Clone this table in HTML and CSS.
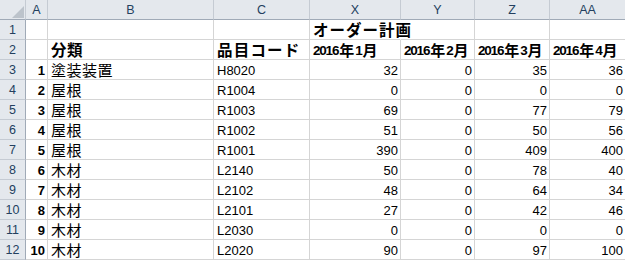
FILE: index.html
```html
<!DOCTYPE html>
<html lang="ja">
<head>
<meta charset="utf-8">
<title>オーダー計画</title>
<link rel="stylesheet" href="styles.css">
</head>
<body>
<div class="sheet">
  <div class="c ch corner"><span class="tri"></span></div>
  <div class="c ch">A</div><div class="c ch">B</div><div class="c ch">C</div><div class="c ch">X</div><div class="c ch">Y</div><div class="c ch">Z</div><div class="c ch">AA</div>

  <div class="c rh">1</div>
  <div class="c"></div><div class="c"></div><div class="c"></div>
  <div class="c spill"><span class="jp b title">オーダー計画</span></div>
  <div class="c"></div><div class="c"></div><div class="c"></div>

  <div class="c rh">2</div>
  <div class="c"></div>
  <div class="c"><span class="jp b hdr">分類</span></div>
  <div class="c"><span class="jp b hdr code">品目コード</span></div>
  <div class="c"><span class="mo">2016</span><span class="jp b m">年</span><span class="mo">1</span><span class="jp b m">月</span></div>
  <div class="c"><span class="mo">2016</span><span class="jp b m">年</span><span class="mo">2</span><span class="jp b m">月</span></div>
  <div class="c"><span class="mo">2016</span><span class="jp b m">年</span><span class="mo">3</span><span class="jp b m">月</span></div>
  <div class="c"><span class="mo">2016</span><span class="jp b m">年</span><span class="mo">4</span><span class="jp b m">月</span></div>

  <div class="c rh">3</div><div class="c r b">1</div><div class="c"><span class="jp">塗装装置</span></div><div class="c">H8020</div><div class="c r">32</div><div class="c r">0</div><div class="c r">35</div><div class="c r">36</div>
  <div class="c rh">4</div><div class="c r b">2</div><div class="c"><span class="jp">屋根</span></div><div class="c">R1004</div><div class="c r">0</div><div class="c r">0</div><div class="c r">0</div><div class="c r">0</div>
  <div class="c rh">5</div><div class="c r b">3</div><div class="c"><span class="jp">屋根</span></div><div class="c">R1003</div><div class="c r">69</div><div class="c r">0</div><div class="c r">77</div><div class="c r">79</div>
  <div class="c rh">6</div><div class="c r b">4</div><div class="c"><span class="jp">屋根</span></div><div class="c">R1002</div><div class="c r">51</div><div class="c r">0</div><div class="c r">50</div><div class="c r">56</div>
  <div class="c rh">7</div><div class="c r b">5</div><div class="c"><span class="jp">屋根</span></div><div class="c">R1001</div><div class="c r">390</div><div class="c r">0</div><div class="c r">409</div><div class="c r">400</div>
  <div class="c rh">8</div><div class="c r b">6</div><div class="c"><span class="jp">木材</span></div><div class="c">L2140</div><div class="c r">50</div><div class="c r">0</div><div class="c r">78</div><div class="c r">40</div>
  <div class="c rh">9</div><div class="c r b">7</div><div class="c"><span class="jp">木材</span></div><div class="c">L2102</div><div class="c r">48</div><div class="c r">0</div><div class="c r">64</div><div class="c r">34</div>
  <div class="c rh">10</div><div class="c r b">8</div><div class="c"><span class="jp">木材</span></div><div class="c">L2101</div><div class="c r">27</div><div class="c r">0</div><div class="c r">42</div><div class="c r">46</div>
  <div class="c rh">11</div><div class="c r b">9</div><div class="c"><span class="jp">木材</span></div><div class="c">L2030</div><div class="c r">0</div><div class="c r">0</div><div class="c r">0</div><div class="c r">0</div>
  <div class="c rh">12</div><div class="c r b">10</div><div class="c"><span class="jp">木材</span></div><div class="c">L2020</div><div class="c r">90</div><div class="c r">0</div><div class="c r">97</div><div class="c r">100</div>
</div>
</body>
</html>
```
FILE: styles.css
```css
html, body {
  margin: 0;
  padding: 0;
  background: #ffffff;
  overflow: hidden;
}

.sheet {
  display: grid;
  grid-template-columns: 26px 22px 166px 96px 91px 74px 75px 76px;
  grid-auto-rows: 20px;
  font-family: "Liberation Sans", "Noto Sans CJK JP", sans-serif;
  font-size: 13px;
  color: #000000;
}

.c {
  box-sizing: border-box;
  border-right: 1px solid #d5d5d5;
  border-bottom: 1px solid #d5d5d5;
  display: flex;
  align-items: flex-end;
  justify-content: flex-start;
  padding: 0 2px 0 3px;
  line-height: 16px;
  white-space: nowrap;
  min-width: 0;
}

.r {
  justify-content: flex-end;
}

.b {
  font-weight: bold;
}

.jp {
  font-family: "Noto Sans CJK JP", sans-serif;
  font-size: 15px;
  line-height: 15px;
  letter-spacing: 0.5px;
  margin-bottom: 2px;
}

.hdr {
  font-size: 15.5px;
  line-height: 15.5px;
}

.title {
  font-size: 15.5px;
  line-height: 15.5px;
  letter-spacing: 1px;
}

.code {
  letter-spacing: 1.2px;
}

.mo {
  font-weight: bold;
  font-size: 13.5px;
  letter-spacing: -1.2px;
  padding-right: 1px;
}

.m {
  font-size: 15px;
  letter-spacing: 0;
  margin-right: 1px;
}

.spill {
  border-right-color: transparent;
}

.ch {
  background: #e4e8ed;
  color: #233f5f;
  border-right: 1px solid #c5cbd3;
  border-bottom: 1px solid #a0aab7;
  justify-content: center;
  align-items: flex-end;
  padding: 0 0 1px 0;
  font-size: 12.5px;
}

.rh {
  background: #e4e8ed;
  color: #233f5f;
  border-right: 1px solid #a0aab7;
  border-bottom: 1px solid #c5cbd3;
  justify-content: center;
  padding: 0 0 1px 0;
  font-size: 12.5px;
}

.corner {
  justify-content: flex-end;
  align-items: flex-end;
  padding: 0 1px 1px 0;
}

.tri {
  display: block;
  width: 12px;
  height: 12px;
  background: #bcc3cb;
  clip-path: polygon(100% 0, 100% 100%, 0 100%);
}
```
